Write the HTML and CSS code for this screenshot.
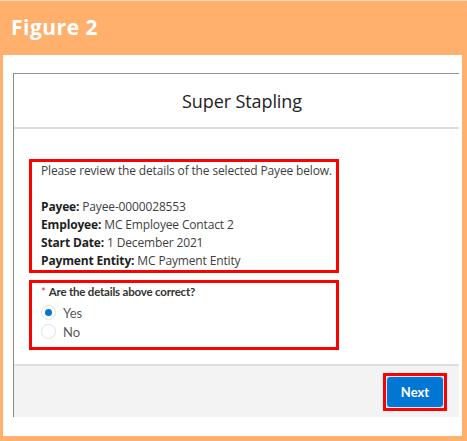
FILE: index.html
```html
<!DOCTYPE html>
<html>
<head>
<meta charset="utf-8">
<link rel="stylesheet" href="styles.css">
</head>
<body>
<div class="frame">
  <div class="fig-bar"><span class="fig-title">Figure 2</span></div>
  <div class="panel">
    <div class="card">
      <div class="card-header"><h1 class="card-title">Super Stapling</h1></div>
      <div class="card-body">
        <div class="hl details">
          <p class="line">Please review the details of the selected Payee below.</p>
          <p class="line blank">&nbsp;</p>
          <p class="line"><b>Payee:</b> Payee-0000028553</p>
          <p class="line"><b>Employee:</b> MC Employee Contact 2</p>
          <p class="line"><b>Start Date:</b> 1 December 2021</p>
          <p class="line"><b>Payment Entity:</b> MC Payment Entity</p>
        </div>
        <div class="hl question">
          <div class="q-label"><span class="req">*</span>Are the details above correct?</div>
          <label class="radio"><span class="dot checked"></span><span class="r-text">Yes</span></label>
          <label class="radio"><span class="dot"></span><span class="r-text">No</span></label>
        </div>
      </div>
      <div class="card-footer">
        <div class="btn-hl"><button class="btn">Next</button></div>
      </div>
    </div>
  </div>
</div>
</body>
</html>
```
FILE: styles.css
```css
html, body {
  margin: 0;
  padding: 0;
}
body {
  width: 467px;
  height: 441px;
  background: #ffb06c;
  overflow: hidden;
}
.frame {
  width: 467px;
  height: 441px;
  display: flex;
  flex-direction: column;
}
.fig-bar {
  height: 55px;
  box-sizing: border-box;
  padding: 13px 0 0 11px;
  border-top: 1px solid #ffd9b6;
}
.fig-title {
  font-family: "Open Sans", sans-serif;
  font-weight: 700;
  font-size: 21px;
  letter-spacing: 0.5px;
  color: #ffffff;
  line-height: 26px;
}
.panel {
  margin: 0 5px 5px 3px;
  background: #ffffff;
  height: 381px;
  box-sizing: border-box;
  padding: 18px 3px 20px 10px;
}
.card {
  border-left: 1px solid #8a8a8a;
  border-top: 1px solid #8a9a9a;
  height: 343px;
  display: flex;
  flex-direction: column;
}
.card-header {
  height: 53px;
  border-bottom: 2px solid #dcdcdc;
  display: flex;
  align-items: center;
  justify-content: center;
  padding-left: 11px;
}
.card-title {
  margin: 0;
  font-family: "Open Sans", sans-serif;
  font-weight: 400;
  font-size: 18px;
  color: #222222;
  letter-spacing: -0.1px;
}
.card-body {
  padding: 30px 0 14px 15px;
  font-family: "Open Sans", sans-serif;
  color: #3e3e3e;
}
.hl {
  width: 310px;
  box-sizing: border-box;
  border: 3px solid #ff0000;
}
.details {
  padding: 0 0 0 9px;
}
.line {
  margin: 0;
  font-size: 12px;
  line-height: 18px;
  letter-spacing: -0.15px;
  white-space: nowrap;
}
.line b {
  font-weight: 700;
  color: #1e1e1e;
}
.question {
  margin-top: 7px;
  padding: 1px 0 6px 9px;
}
.q-label {
  font-family: Lato, sans-serif;
  font-weight: 700;
  font-size: 11.5px;
  letter-spacing: -0.2px;
  line-height: 16px;
  color: #333333;
  margin-bottom: 3px;
}
.req {
  color: #e03a3a;
  font-weight: 400;
  margin-right: 3px;
}
.radio {
  display: flex;
  align-items: center;
  height: 19px;
}
.dot {
  width: 13px;
  height: 13px;
  border: 1px solid #e2e2e2;
  border-radius: 50%;
  box-sizing: content-box;
  display: flex;
  align-items: center;
  justify-content: center;
  background: #ffffff;
}
.dot.checked::after {
  content: "";
  width: 7px;
  height: 7px;
  border-radius: 50%;
  background: #0176d3;
}
.r-text {
  font-family: Lato, sans-serif;
  font-size: 13px;
  color: #5a5a5a;
  margin-left: 7px;
}
.card-footer {
  flex: 1;
  background: #f3f3f3;
  border-top: 2px solid #dedede;
  display: flex;
  justify-content: flex-end;
  align-items: flex-start;
  padding: 7px 12px 0 0;
}
.btn-hl {
  border: 3px solid #ff0000;
  padding: 0;
}
.btn {
  display: block;
  width: 58px;
  height: 32px;
  border: 1px solid #d6e6f5;
  border-radius: 4px;
  background: #0176d3;
  color: #ffffff;
  font-family: Lato, sans-serif;
  font-weight: 700;
  font-size: 13px;
  padding: 0;
}
```
